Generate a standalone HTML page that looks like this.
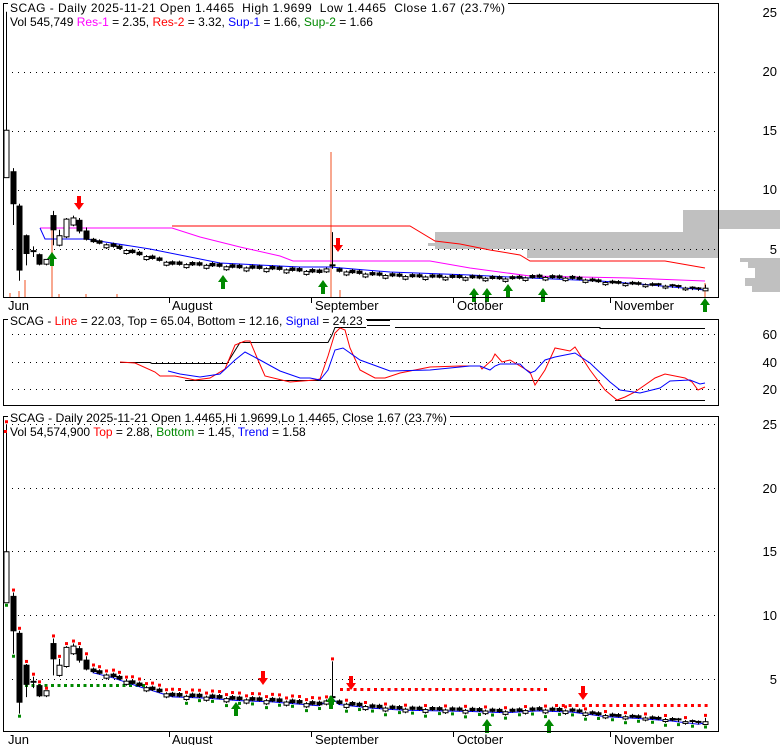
<!DOCTYPE html>
<html><head><meta charset="utf-8"><style>
html,body{margin:0;padding:0;background:#fff;width:780px;height:745px;overflow:hidden}
svg{display:block;font-family:"Liberation Sans",Arial,sans-serif;font-size:12px}
text{white-space:pre}
</style></head><body>
<svg id="s" width="780" height="745" viewBox="0 0 780 745" xmlns="http://www.w3.org/2000/svg">
<rect width="780" height="745" fill="#fff"/>
<!-- volume profile -->
<rect x="683" y="210" width="97" height="19" fill="#c0c0c0"/>
<rect x="683" y="229" width="36" height="29" fill="#c0c0c0"/>
<rect x="435" y="232" width="248" height="17" fill="#c0c0c0"/>
<rect x="428" y="243" width="8" height="3" fill="#c0c0c0"/>
<rect x="527" y="249" width="156" height="9" fill="#c0c0c0"/>
<polygon fill="#c0c0c0" points="740,258 780,258 780,292 752,292 752,286 745,286 745,278 755,278 755,268 748,268 748,262 740,262"/>
<g id="g"></g>
<!-- frames -->
<rect x="3.5" y="3.5" width="715" height="294" fill="none" stroke="#000"/>
<rect x="3.5" y="319.5" width="715" height="86" fill="none" stroke="#000"/>
<rect x="3.5" y="416.5" width="715" height="315" fill="none" stroke="#000"/>
<!-- headers -->
<rect x="8" y="0" width="500" height="13" fill="#fff"/>
<text x="10" y="12" textLength="495" lengthAdjust="spacing">SCAG - Daily 2025-11-21 Open 1.4465  High 1.9699  Low 1.4465  Close 1.67 (23.7%)</text>
<text x="10" y="26">Vol 545,749 <tspan fill="#f0f">Res-1</tspan> = 2.35, <tspan fill="red">Res-2</tspan> = 3.32, <tspan fill="#00f">Sup-1</tspan> = 1.66, <tspan fill="#080">Sup-2</tspan> = 1.66</text>
<rect x="8" y="313" width="358" height="13" fill="#fff"/>
<text x="10" y="325">SCAG - <tspan fill="red">Line</tspan> = 22.03, Top = 65.04, Bottom = 12.16, <tspan fill="#00f">Signal</tspan> = 24.23</text>
<rect x="8" y="410" width="442" height="13" fill="#fff"/>
<text x="10" y="422" textLength="437" lengthAdjust="spacingAndGlyphs">SCAG - Daily 2025-11-21 Open 1.4465,Hi 1.9699,Lo 1.4465, Close 1.67 (23.7%)</text>
<text x="10" y="436">Vol 54,574,900 <tspan fill="red">Top</tspan> = 2.88, <tspan fill="#080">Bottom</tspan> = 1.45, <tspan fill="#00f">Trend</tspan> = 1.58</text>
<!-- axis labels -->
<g text-anchor="end" font-size="13">
<text x="777" y="17">25</text><text x="777" y="76">20</text><text x="777" y="135">15</text><text x="777" y="194">10</text><text x="777" y="254">5</text>
<text x="777" y="339">60</text><text x="777" y="367">40</text><text x="777" y="394">20</text>
<text x="777" y="429">25</text><text x="777" y="493">20</text><text x="777" y="556">15</text><text x="777" y="620">10</text><text x="777" y="684">5</text>
</g>
<g font-size="13">
<text x="8" y="310">Jun</text><text x="172" y="310">August</text><text x="315" y="310">September</text><text x="457" y="310">October</text><text x="614" y="310">November</text>
<text x="8" y="744">Jun</text><text x="172" y="744">August</text><text x="315" y="744">September</text><text x="457" y="744">October</text><text x="614" y="744">November</text>
</g>
<g stroke="#000"><path d="M169.5 298v5M311.5 298v5M453.5 298v5M610.5 298v5M169.5 732v5M311.5 732v5M453.5 732v5M610.5 732v5"/></g>
</svg>
<script>
var G=document.getElementById('g'),h='';
function y1(p){return 308-11.85*p}function y3(p){return 743-12.75*p}
function dots(y,x0,x1){h+='<line x1="'+x0+'" y1="'+y+'" x2="'+x1+'" y2="'+y+'" stroke="#000" stroke-dasharray="1,5"/>';}
[72,131,190,249].forEach(function(y){dots(y+.5,12,718)});
[334,362,389].forEach(function(y){dots(y+.5,12,718)});
[424,488,551,615,679].forEach(function(y){dots(y+.5,12,718)});
var K=[[13,5.6],[16,5.2],[20,4.5],[25,3.7],[30,3.6],[35,3.4],[40,3.3],[47,3.0],[48,3.3],[50,3.1],[55,2.8],[60,2.65],[70,2.55],[75,2.45],[80,2.6],[85,2.5],[90,2.15],[95,2.0],[100,1.8],[104,1.55]];
function interp(i){for(var k=0;k<K.length-1;k++){if(i>=K[k][0]&&i<=K[k+1][0]){var t=(i-K[k][0])/(K[k+1][0]-K[k][0]);return K[k][1]+t*(K[k+1][1]-K[k][1]);}}return 1.5;}
var D=[[11,15,25,11],[11.5,8.8,11.8,7],[8.6,3.2,8.8,2.3],[6.1,4.6,6.2,3.6],[4.8,4.7,5.2,4.3],[4.5,3.7,4.6,3.6],[3.7,4.1,4.1,3.6],[7.8,6.6,8.2,5.3],[5.3,6.1,6.6,5.2],[6.0,7.5,7.6,5.9],[7.0,7.6,7.8,6.9],[7.4,6.5,7.6,6.3],[6.5,5.8,6.8,5.7]];
for(var i=13;i<105;i++){var c=interp(i),o=c+((i%3==0)?-0.25:0.2)*Math.min(1,c/3);var hi=Math.max(o,c)+0.12,lo=Math.min(o,c)-0.1;if(i==49){o=3.5;c=3.6;hi=6.4;lo=3.3}D.push([o,c,hi,lo]);}
D.push([1.45,1.67,1.97,1.45]);
var N=D.length;function X(i){return 6+i*(699/(N-1))}
function cand(yf,i){var d=D[i],x=Math.round(X(i))+.5,yo=yf(d[0]),yc=yf(d[1]),yh=yf(d[2]),yl=yf(d[3]);
h+='<line x1="'+x+'" y1="'+yh+'" x2="'+x+'" y2="'+yl+'" stroke="#000"/>';
var t=Math.min(yo,yc),b=Math.max(yo,yc);if(b-t<1.5){h+='<line x1="'+(x-3)+'" y1="'+t+'" x2="'+(x+3)+'" y2="'+t+'" stroke="#000" stroke-width="2"/>';return}
h+='<rect x="'+(x-2.5)+'" y="'+t+'" width="5" height="'+(b-t)+'" fill="'+(d[1]>d[0]?'#fff':'#000')+'" stroke="#000"/>';}
var V=[[52,228],[25,280],[331,152],[10,293],[19,291],[340,290],[59,294],[86,294],[117,294],[705,283]];
V.forEach(function(v){h+='<line x1="'+v[0]+'" y1="'+v[1]+'" x2="'+v[0]+'" y2="298" stroke="#f8a890" stroke-width="2"/>'});
function pl(pts,col,w){h+='<polyline fill="none" stroke="'+col+'" stroke-width="'+(w||1)+'" points="'+pts+'"/>'}
pl("40,228 172,228 200,237 240,247 280,256 293,261 430,261 470,268 530,276 630,278 705,281","#f0f");
pl("172,226 410,226 435,241 460,244 490,250 520,255 530,261 665,261 705,268","red");
pl("40,228 45,239 86,239 150,249 220,263 300,267 330,267 390,272 470,275 530,278 600,281 640,284 705,290","#00f");
for(var i=0;i<N;i++)cand(y1,i);
function up(x,yt,ht){h+='<polygon fill="#080" points="'+x+','+yt+' '+(x+5)+','+(yt+7)+' '+(x+2)+','+(yt+7)+' '+(x+2)+','+(yt+ht)+' '+(x-2)+','+(yt+ht)+' '+(x-2)+','+(yt+7)+' '+(x-5)+','+(yt+7)+'"/>'}
function dn(x,yt,ht){var yb=yt+ht;h+='<polygon fill="red" points="'+x+','+yb+' '+(x+5)+','+(yb-7)+' '+(x+2)+','+(yb-7)+' '+(x+2)+','+yt+' '+(x-2)+','+yt+' '+(x-2)+','+(yb-7)+' '+(x-5)+','+(yb-7)+'"/>'}
[[52,252],[223,275],[323,280],[474,288],[487,288],[508,284],[543,288],[705,298]].forEach(function(a){up(a[0],a[1],14)});
dn(79,196,14);dn(338,238,14);
pl("120,362.5 150,362.5 152,363.5 227,363.5 240,342.5 328,342.5 332,335 335,327.5 366,327.5","#000");
pl("185,380.5 600,380.5","#000");pl("395,327.5 600,327.5 600,328.5 705,328.5","#000");pl("615,400.5 705,400.5","#000");
h+='<line x1="367" y1="320.5" x2="390" y2="320.5" stroke="#000"/><line x1="367" y1="325.5" x2="390" y2="325.5" stroke="#000"/>';
pl("120,362 135,363 155,372 160,376 175,376 185,378 195,380 210,378 225,369 235,345 245,341 250,341 258,360 265,376 290,382 315,380 320,379 328,356 335,333 340,328 345,330 350,348 360,370 375,378 385,378 400,373 430,367 460,366 480,366 482,369 492,360 495,354 502,362 510,360 520,366 530,372 535,385 545,370 555,348 570,351 575,347 590,370 605,390 617,400 625,397 635,392 655,378 665,374 685,378 692,382 698,390 705,387","red");
pl("168,371 180,374 200,377 220,374 235,360 245,352 260,360 280,371 300,378 310,378 320,380 328,370 335,350 343,348 360,360 390,371 430,370 470,366 480,366 490,370 495,366 500,364 520,364 525,369 530,373 535,371 545,360 555,357 575,353 590,363 610,382 620,390 640,393 660,388 670,381 690,380 700,384 705,383","#00f");
for(var x=25;x<=148;x+=6.5)h+='<rect x="'+x+'" y="684" width="3" height="3" fill="#080"/>';
for(var x=340;x<=550;x+=6.8)h+='<rect x="'+x+'" y="688" width="3" height="3" fill="red"/>';
for(var x=555;x<=705;x+=6.8)h+='<rect x="'+x+'" y="704" width="3" height="3" fill="red"/>';
var tr=[];for(var i=13;i<N;i++)tr.push(X(i)+','+(y3(D[i][1])+1));pl(tr.join(' '),"#00f");
for(var i=0;i<N;i++){cand(y3,i);var x=Math.round(X(i));
if(i<50||i%3==0)h+='<rect x="'+(x-1)+'" y="'+(y3(D[i][2])-4)+'" width="3" height="3" fill="red"/>';
if(i<3||(i>25&&i%2==1))h+='<rect x="'+(x-1)+'" y="'+(y3(D[i][3])+1)+'" width="3" height="3" fill="#080"/>';}
h+='<rect x="4" y="430" width="3" height="3" fill="red"/>';
[[236,702],[331,695],[487,719],[549,719]].forEach(function(a){up(a[0],a[1],14)});
dn(263,671,14);dn(351,676,14);dn(583,686,14);
G.innerHTML=h;
</script>
</body></html>
